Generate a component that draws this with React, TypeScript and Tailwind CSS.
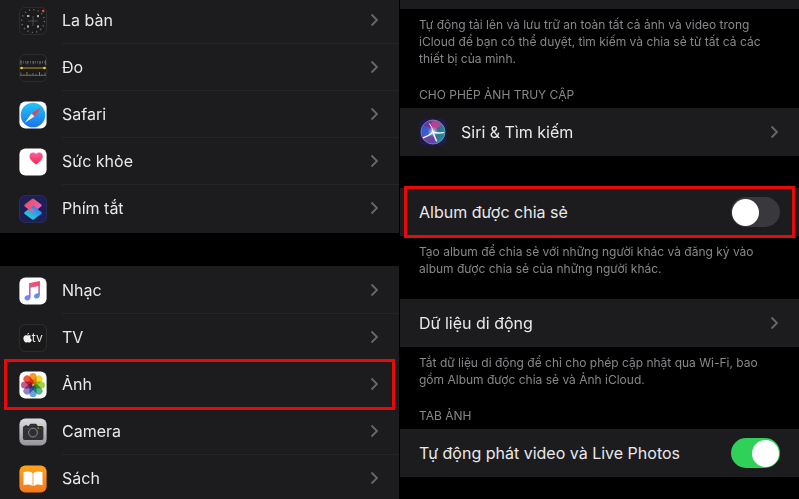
import type { ReactNode } from "react";

function Chevron() {
  return (
    <svg width="9" height="14" viewBox="0 0 9 14" fill="none" aria-hidden="true" className="shrink-0">
      <path d="M1.5 1.5 7 7l-5.5 5.5" stroke="#68686c" strokeWidth="1.8" />
    </svg>
  );
}

function Tile({ children, fill, edge }: { children: ReactNode; fill: string; edge?: string }) {
  return (
    <svg width="28" height="28" viewBox="0 0 28 28" aria-hidden="true" className="shrink-0">
      <rect x=".4" y=".4" width="27.2" height="27.2" rx="6" fill={fill} stroke={edge ?? "none"} strokeWidth=".8" />
      {children}
    </svg>
  );
}

function CompassIcon() {
  return (
    <Tile fill="#1b1b1d" edge="#333336">
      <circle cx="14" cy="14" r="11.4" fill="none" stroke="#6a6a6e" strokeWidth="1.4" strokeDasharray="1.2 3.27" />
      <path d="M14 9v10M9 14h10" stroke="#56565a" strokeWidth=".8" />
      <g fill="#a9a9ad">
        <rect x="8" y="8" width="2.4" height="2" />
        <rect x="18" y="8" width="2" height="2.2" />
        <rect x="8" y="18.4" width="2" height="2.2" />
        <rect x="18" y="18.4" width="2" height="2.2" />
      </g>
      <circle cx="24.2" cy="4" r="1.2" fill="#ff4a36" />
    </Tile>
  );
}

function MeasureIcon() {
  return (
    <Tile fill="#1b1b1d" edge="#333336">
      <path d="M1.5 8.2h25" stroke="#6a6a66" strokeWidth="2.4" strokeDasharray=".8 1.6" />
      <path d="M2 6v5M8.2 7v3.4M14.6 7v3.4M21 7v3.4M26.5 6v5" stroke="#77776f" strokeWidth=".8" />
      <path d="M1 21.4h26" stroke="#68686b" strokeWidth=".9" />
      <path d="M2 18.5v3M5 20v1.5M11 20v1.5M14 19v2.5M17 20v1.5M23 20v1.5M26 18.5v3" stroke="#7c7c74" strokeWidth=".8" />
      <path d="M8 18v3.5M20.5 18v3.5" stroke="#a6964a" strokeWidth=".8" />
      <path d="M2.5 14h23" stroke="#c29c1c" strokeWidth="1" />
      <circle cx="2.5" cy="14" r="1.3" fill="#ffd21f" />
      <circle cx="25.5" cy="14" r="1.3" fill="#ffd21f" />
    </Tile>
  );
}

function SafariIcon() {
  return (
    <Tile fill="#fff">
      <defs>
        <linearGradient id="safari" x1="0" y1="0" x2="0" y2="1">
          <stop stopColor="#25c4f7" />
          <stop offset="1" stopColor="#1b72ea" />
        </linearGradient>
      </defs>
      <circle cx="14" cy="14" r="12.3" fill="url(#safari)" />
      <path d="M22.2 6.2 12.6 12.5l2.8 3z" fill="#ed4045" />
      <path d="m5.8 21.8 6.8-9.3 2.8 3z" fill="#f8f8fa" />
    </Tile>
  );
}

function HealthIcon() {
  return (
    <Tile fill="#fff">
      <defs>
        <linearGradient id="health" x1="0" y1="0" x2="0" y2="1">
          <stop stopColor="#fa5fa8" />
          <stop offset="1" stopColor="#f8283c" />
        </linearGradient>
      </defs>
      <path
        d="M17.1 16.6C13.4 14 10.5 11.4 10.5 8.3c0-2.3 1.5-3.9 3.5-3.9 1.3 0 2.5.6 3.1 1.7.6-1.1 1.8-1.7 3.1-1.7 2 0 3.6 1.6 3.6 3.9 0 3.1-3 5.7-6.7 8.3Z"
        fill="url(#health)"
      />
    </Tile>
  );
}

function ShortcutsIcon() {
  return (
    <Tile fill="#1d1f57" edge="#303461">
      <defs>
        <linearGradient id="scTop" x1="0" y1=".2" x2="1" y2=".8">
          <stop stopColor="#ee4668" />
          <stop offset=".5" stopColor="#e75b82" />
          <stop offset="1" stopColor="#d568e4" />
        </linearGradient>
        <linearGradient id="scBottom" x1="0" y1="1" x2="1" y2="0">
          <stop stopColor="#38e3b0" />
          <stop offset=".5" stopColor="#29a9e6" />
          <stop offset="1" stopColor="#2e6ff2" />
        </linearGradient>
      </defs>
      <path
        d="M12.9 11.5q1.1-.8 2.2 0l7.2 5.6q1 .9 0 1.8l-7.2 5.4q-1.1.8-2.2 0l-7.2-5.4q-1-.9 0-1.8z"
        fill="url(#scBottom)"
      />
      <path
        d="M12.9 4q1.1-.8 2.2 0l7.2 5.4q1 .9 0 1.8l-3.7 3-4.6-3.4-2.3 2.3 3.9 3-1.2 1q-.6.4-1.3 0l-7.4-5.7q-1-.9 0-1.8z"
        fill="url(#scTop)"
      />
    </Tile>
  );
}

function MusicIcon() {
  return (
    <Tile fill="#fff">
      <defs>
        <linearGradient id="music" x1=".6" y1="0" x2=".3" y2="1">
          <stop stopColor="#fb4867" />
          <stop offset=".38" stopColor="#d2609f" />
          <stop offset=".65" stopColor="#8c6bf2" />
          <stop offset="1" stopColor="#688dff" />
        </linearGradient>
        <linearGradient id="musicStem" x1="0" y1="0" x2="0" y2="1">
          <stop stopColor="#fb4867" />
          <stop offset=".5" stopColor="#a86bd0" />
          <stop offset="1" stopColor="#38a3f4" />
        </linearGradient>
      </defs>
      <path
        d="M10 6.2 20.9 4v4.7l-9.3 2v9.3c0 2.1-1.6 3.4-3.4 3.4-1.6 0-2.7-.9-2.7-2.3 0-1.7 1.4-2.5 3.3-2.8.9-.1 1.2-.5 1.2-1.3z"
        fill="url(#music)"
      />
      <path d="M19.3 6h1.6v12.1c0 2.1-1.5 3.4-3.3 3.4-1.5 0-2.6-.9-2.6-2.3 0-1.7 1.3-2.5 3.1-2.8.9-.1 1.2-.5 1.2-1.2z" fill="url(#musicStem)" />
    </Tile>
  );
}

function TvIcon() {
  return (
    <Tile fill="#1a1a1b" edge="#353538">
      <path
        d="M10 8.7c-.9.1-1.8 1-1.7 2 .9 0 1.7-1 1.7-2Zm1.8 3c-1.2-.8-2.2-.5-3.1-.1-1-.4-2-.7-3.1.1-1.7 1.1-1.5 4-.1 5.8.9 1.3 1.6 1.3 2.7.8.3-.1.8-.1 1.1 0 1.3.5 2 .3 2.9-1 .3-.4.5-.8.7-1.4-1.7-.9-2-3-1.1-4.2Z"
        fill="#f4f4f5"
      />
      <text x="12.8" y="18.4" fontFamily="Inter, sans-serif" fontSize="12" fill="#e6e6e8">
        tv
      </text>
    </Tile>
  );
}

const petals = [
  { color: "#f59a22", angle: 0 },
  { color: "#eadc26", angle: 45 },
  { color: "#a8cf46", angle: 90 },
  { color: "#57b98c", angle: 135 },
  { color: "#66a4dc", angle: 180 },
  { color: "#9383c4", angle: 225 },
  { color: "#c45c93", angle: 270 },
  { color: "#ef5545", angle: 315 },
];

function PhotosIcon() {
  return (
    <Tile fill="#fff">
      <g className="isolate">
        {petals.map((p) => (
          <rect
            key={p.angle}
            x="10.4"
            y="2"
            width="7.2"
            height="11.4"
            rx="3.6"
            fill={p.color}
            transform={`rotate(${p.angle} 14 14)`}
            className="mix-blend-multiply"
          />
        ))}
      </g>
    </Tile>
  );
}

function CameraIcon() {
  return (
    <Tile fill="url(#camera)">
      <defs>
        <linearGradient id="camera" x1="0" y1="0" x2="0" y2="1">
          <stop stopColor="#dddde1" />
          <stop offset="1" stopColor="#949498" />
        </linearGradient>
      </defs>
      <path
        d="M5.8 7.2h2.6v.7h1.3l1.2-1.7q.3-.5.9-.5h4.8q.6 0 .9.5l1.3 1.7h4q1.6 0 1.6 1.6v10.8q0 1.6-1.6 1.6H5.5q-1.6 0-1.6-1.6V9.5q0-1.5 1.9-1.6z"
        fill="#303033"
      />
      <path d="M4 10.7h7M17.5 10.7h6.9" stroke="#505053" strokeWidth=".5" />
      <circle cx="14" cy="14.6" r="4.4" fill="#353538" stroke="#919195" strokeWidth=".9" />
      <circle cx="14" cy="14.6" r="3" fill="#2e2e31" />
      <circle cx="19.2" cy="10" r=".7" fill="#d9b32f" />
    </Tile>
  );
}

function BooksIcon() {
  return (
    <Tile fill="url(#books)">
      <defs>
        <linearGradient id="books" x1="0" y1="0" x2="0" y2="1">
          <stop stopColor="#fda51b" />
          <stop offset="1" stopColor="#f5781b" />
        </linearGradient>
      </defs>
      <path d="M13.6 8.3C11.8 6.1 7.2 5.9 4.5 7.3v12.9c2.9-1.1 7.1-1 9.1 1z" fill="#fff" />
      <path d="M14.4 8.3c1.8-2.2 6.4-2.4 9.1-1v12.9c-2.9-1.1-7.1-1-9.1 1z" fill="#fff" />
    </Tile>
  );
}

function SiriIcon() {
  return (
    <Tile fill="#1d1a4c">
      <defs>
        <linearGradient id="siri" x1="0" y1=".2" x2="1" y2=".7">
          <stop stopColor="#3a2fae" />
          <stop offset=".35" stopColor="#8a3398" />
          <stop offset=".65" stopColor="#2f6f96" />
          <stop offset="1" stopColor="#15998e" />
        </linearGradient>
        <radialGradient id="siriGlow">
          <stop stopColor="#fff" />
          <stop offset=".35" stopColor="#b8e5ff" stopOpacity=".6" />
          <stop offset="1" stopColor="#7cc5ff" stopOpacity="0" />
        </radialGradient>
      </defs>
      <circle cx="14" cy="14" r="12" fill="url(#siri)" stroke="#8fa0c8" strokeWidth=".7" />
      <path d="M14 14C10 9 6.5 7 4 8.5 2 13 3 17 5.5 20.5z" fill="#2b68dc" opacity=".75" />
      <path d="M14 14C12 8 11 5 14.5 2.5c4 .5 6.5 2.5 8 4.5z" fill="#df3f90" opacity=".65" />
      <path d="M14 14c3 3 5 5 4 10.4-3 1.6-6 1.5-9 .2z" fill="#7436b0" opacity=".75" />
      <circle cx="14" cy="14" r="5.5" fill="url(#siriGlow)" />
      <g fill="none" stroke="#f2faff" strokeLinecap="round">
        <path d="M14 14Q13.4 9.5 10.6 5.8" strokeWidth="1" />
        <path d="M14 14q4.500 1.600 10.500.6" strokeWidth="1.4" />
        <path d="M14 14q-3.600 3.600-9.400 5.600" strokeWidth="1.5" />
        <path d="M14 14q1.400 4.500 3.500 8.800" strokeWidth="1.5" />
      </g>
    </Tile>
  );
}

type App = { name: string; icon: ReactNode; marked?: boolean };

const systemApps: App[] = [
  { name: "La bàn", icon: <CompassIcon /> },
  { name: "Đo", icon: <MeasureIcon /> },
  { name: "Safari", icon: <SafariIcon /> },
  { name: "Sức khỏe", icon: <HealthIcon /> },
  { name: "Phím tắt", icon: <ShortcutsIcon /> },
];

const mediaApps: App[] = [
  { name: "Nhạc", icon: <MusicIcon /> },
  { name: "TV", icon: <TvIcon /> },
  { name: "Ảnh", icon: <PhotosIcon />, marked: true },
  { name: "Camera", icon: <CameraIcon /> },
  { name: "Sách", icon: <BooksIcon /> },
];

function Marker() {
  return <span className="pointer-events-none absolute -inset-y-0.5 inset-x-1 z-10 border-3 border-[#e60a0a]" />;
}

function AppList({ apps }: { apps: App[] }) {
  return (
    <ul className="bg-[#1c1c1f] py-px">
      {apps.map((app) => (
        <li key={app.name} className="group relative">
          <a href="#" className="flex items-center gap-[15px] pl-[19px]">
            {app.icon}
            <span className="flex h-[47px] flex-1 items-center justify-between border-b border-[#252528] pr-5 group-last:border-transparent">
              {app.name}
              <Chevron />
            </span>
          </a>
          {app.marked && <Marker />}
        </li>
      ))}
    </ul>
  );
}

function LinkRow({ label, icon }: { label: string; icon?: ReactNode }) {
  return (
    <a href="#" className="flex h-12 items-center gap-[14px] bg-[#1c1c1f] pl-[19px] pr-5">
      {icon}
      <span className="flex-1">{label}</span>
      <Chevron />
    </a>
  );
}

function SwitchRow({ label, on, marked }: { label: string; on?: boolean; marked?: boolean }) {
  return (
    <label className="relative flex h-12 items-center justify-between bg-[#1c1c1f] px-[19px]">
      {label}
      <input
        type="checkbox"
        role="switch"
        defaultChecked={on}
        className="flex h-[30px] w-[49px] shrink-0 appearance-none items-center rounded-full bg-[#39393d] px-px before:size-[27px] before:rounded-full before:bg-white checked:justify-end checked:bg-[#30d158]"
      />
      {marked && <Marker />}
    </label>
  );
}

function Note({ children }: { children: ReactNode }) {
  return <p className="px-[19px] pt-[7px] text-[12px] leading-[17px] text-[#87878c]">{children}</p>;
}

function Heading({ children }: { children: ReactNode }) {
  return <h2 className="px-[19px] pb-[5px] pt-[19px] text-[12px] leading-[17px] text-[#87878c]">{children}</h2>;
}

export default function App() {
  return (
    <div className="grid h-screen grid-cols-2 gap-px overflow-hidden bg-black font-['Inter','Noto_Sans',sans-serif] text-[16px] leading-5 text-[#e9e9eb]">
      <nav className="-mt-1 flex flex-col gap-[33px]">
        <AppList apps={systemApps} />
        <AppList apps={mediaApps} />
      </nav>

      <main>
        <div className="h-[9px] bg-[#1c1c1f]" />
        <Note>
          Tự động tải lên và lưu trữ an toàn tất cả ảnh và video trong iCloud để bạn có thể duyệt, tìm kiếm và chia sẻ
          từ tất cả các thiết bị của mình.
        </Note>
        <Heading>CHO PHÉP ẢNH TRUY CẬP</Heading>
        <LinkRow label="Siri & Tìm kiếm" icon={<SiriIcon />} />

        <div className="mt-8">
          <SwitchRow label="Album được chia sẻ" marked />
          <Note>Tạo album để chia sẻ với những người khác và đăng ký vào album được chia sẻ của những người khác.</Note>
        </div>

        <div className="mt-[22px]">
          <LinkRow label="Dữ liệu di động" />
          <Note>Tắt dữ liệu di động để chỉ cho phép cập nhật qua Wi-Fi, bao gồm Album được chia sẻ và Ảnh iCloud.</Note>
        </div>

        <Heading>TAB ẢNH</Heading>
        <SwitchRow label="Tự động phát video và Live Photos" on />
      </main>
    </div>
  );
}
